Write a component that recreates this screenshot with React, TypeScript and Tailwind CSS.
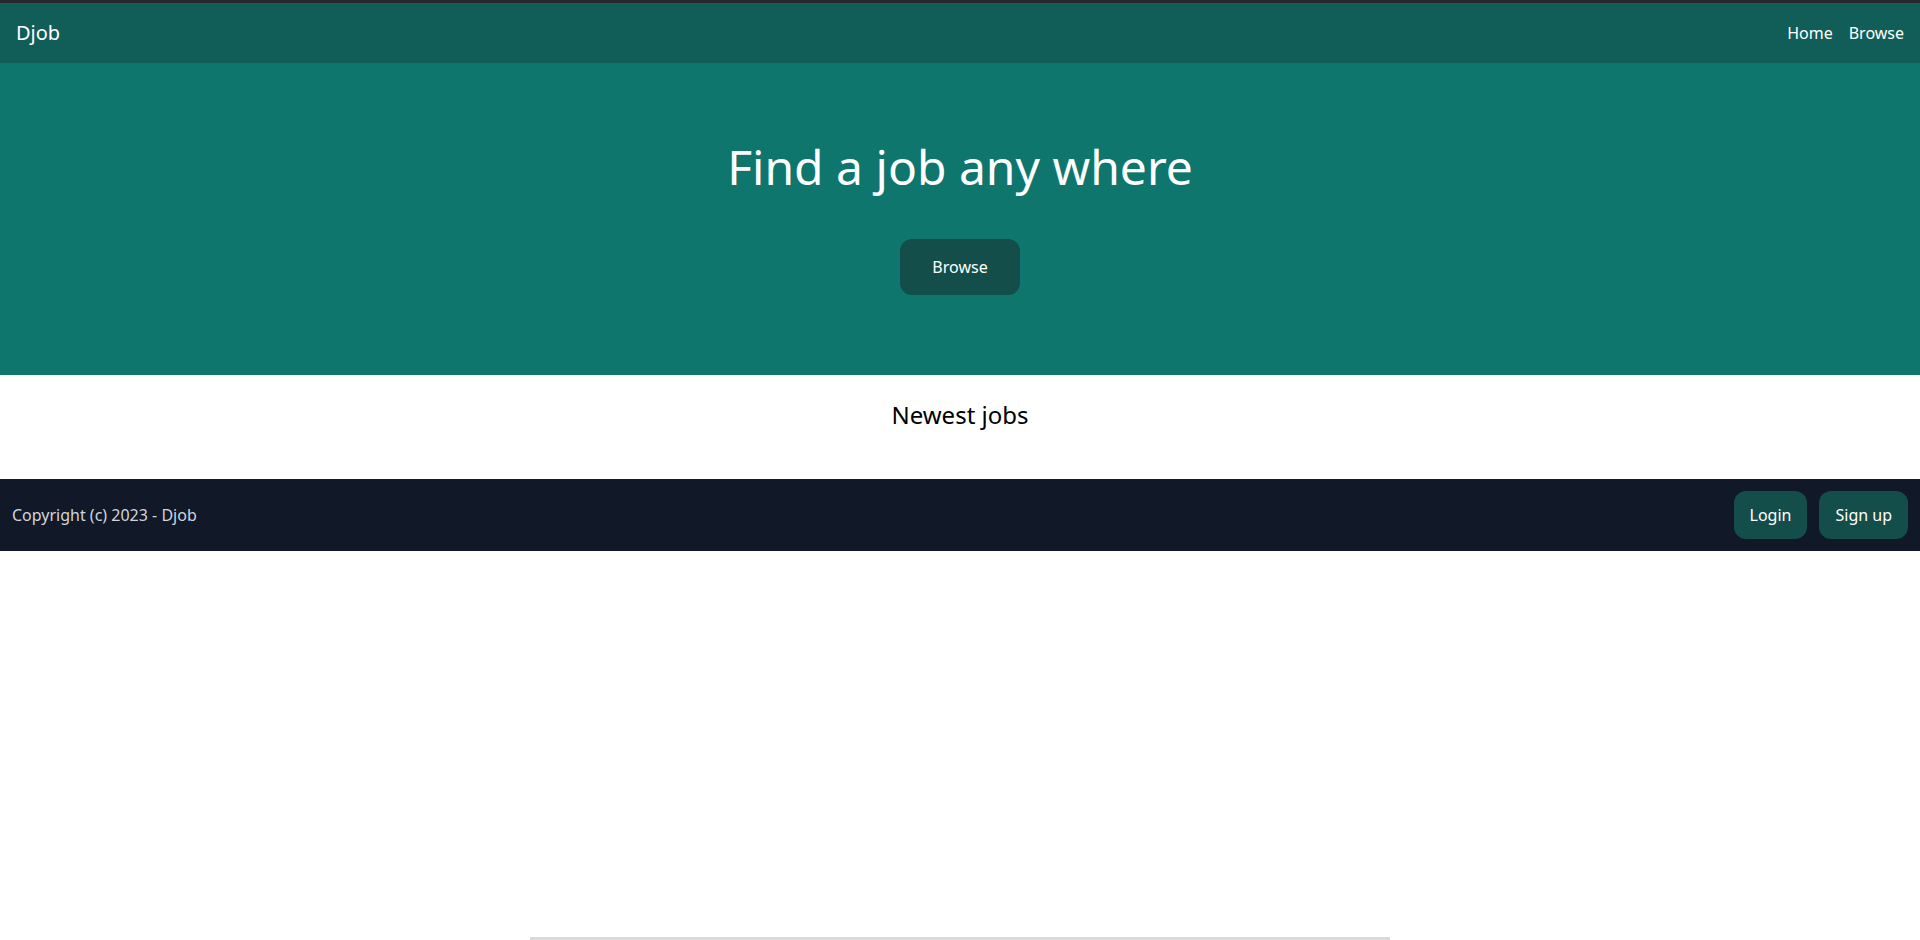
export default function App() {
  return (
    <div className="min-h-[940px] bg-white font-['Noto_Sans',sans-serif]">
      <div className="h-[3px] bg-[#26282c]" />
      <nav className="flex items-center justify-between p-4 bg-[#115e59] text-white">
        <a href="#" className="text-xl">Djob</a>
        <div className="flex items-center space-x-4">
          <a href="#">Home</a>
          <a href="#">Browse</a>
        </div>
      </nav>

      {/* hero */}
      <div className="py-20 bg-[#0f766e] text-center text-white">
        <h1 className="mb-12 text-5xl">Find a job any where</h1>
        <a href="#" className="inline-block px-8 py-4 bg-[#134e4a] rounded-xl">
          Browse
        </a>
      </div>

      {/* newest jobs */}
      <div className="pt-6 pb-12 text-center">
        <h2 className="text-2xl text-black">Newest jobs</h2>
      </div>

      <footer className="flex items-center justify-between p-3 bg-[#111827]">
        <p className="text-[#d1d5db]">Copyright (c) 2023 - Djob</p>
        <div className="flex items-center space-x-3">
          <a href="#" className="inline-block px-4 py-3 bg-[#134e4a] text-white rounded-xl">
            Login
          </a>
          <a href="#" className="inline-block px-4 py-3 bg-[#134e4a] text-white rounded-xl">
            Sign up
          </a>
        </div>
      </footer>

      <div className="fixed bottom-0 left-[530px] w-[860px] h-[3px] bg-[#d9d9d9]" />
    </div>
  );
}
